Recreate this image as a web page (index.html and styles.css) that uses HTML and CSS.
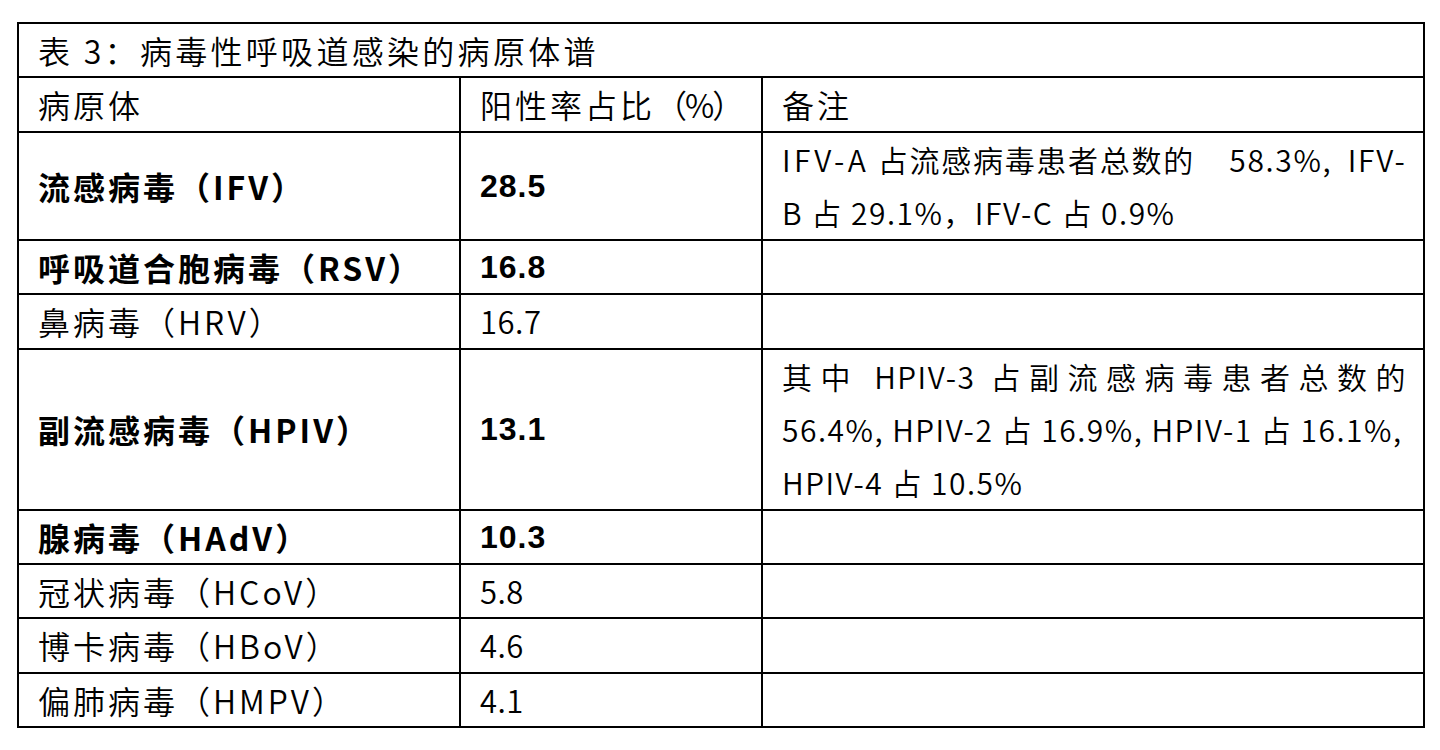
FILE: index.html
```html
<!DOCTYPE html>
<html lang="zh-CN">
<head>
<meta charset="utf-8">
<title>表 3</title>
<link rel="stylesheet" href="styles.css">
</head>
<body>
<table class="tbl">
  <colgroup>
    <col class="c1">
    <col class="c2">
    <col class="c3">
  </colgroup>
  <tr><td class="title" colspan="3">表 3：病毒性呼吸道感染的病原体谱</td></tr>
  <tr class="head"><td>病原体</td><td>阳性率占比<span class="tight">（%）</span></td><td>备注</td></tr>
  <tr class="b"><td>流感病毒（IFV）</td><td class="num">28.5</td><td class="note"><span class="ln l1"><span class="wl">IFV-A</span> 占流感病毒患者总数的<span class="g1"> </span>58.3%,<span class="g2"> </span>IFV-</span><span class="ln">B 占 29.1%，IFV-C 占 0.9%</span></td></tr>
  <tr class="b"><td>呼吸道合胞病毒（RSV）</td><td class="num">16.8</td><td></td></tr>
  <tr><td>鼻病毒（HRV）</td><td class="rnum">16.7</td><td></td></tr>
  <tr class="b"><td>副流感病毒（HPIV）</td><td class="num">13.1</td><td class="note"><span class="jl">其中 HPIV-3 占副流感病毒患者总数的</span><span class="ln">56.4%, HPIV-2 占 16.9%, HPIV-1 占 16.1%,</span><span class="ln">HPIV-4 占 10.5%</span></td></tr>
  <tr class="b"><td>腺病毒（HAdV）</td><td class="num">10.3</td><td></td></tr>
  <tr><td>冠状病毒（HCoV）</td><td class="rnum">5.8</td><td></td></tr>
  <tr><td>博卡病毒（HBoV）</td><td class="rnum">4.6</td><td></td></tr>
  <tr><td>偏肺病毒（HMPV）</td><td class="rnum">4.1</td><td></td></tr>
</table>
</body>
</html>
```
FILE: styles.css
```css
html, body {
  margin: 0;
  padding: 0;
  background: #fff;
}
body {
  padding: 22px 0 0 17px;
  font-family: "Noto Sans CJK SC", "Noto Sans", sans-serif;
  color: #000;
}
.tbl {
  border-collapse: collapse;
  table-layout: fixed;
  width: 1406px;
}
.c1 { width: 442px; }
.c2 { width: 302px; }
.c3 { width: 662px; }
.tbl td {
  border: 2px solid #000;
  padding: 0 16px 0 19px;
  font-size: 32px;
  line-height: 52.4px;
  letter-spacing: 3px;
  vertical-align: middle;
  white-space: nowrap;
  font-weight: 350;
}
.tbl td.title {
  letter-spacing: 3.3px;
}
.tight {
  letter-spacing: -2px;
}
.tbl .b td {
  font-weight: 700;
}
.tbl .b td.num {
  font-family: "Liberation Sans", Arial, sans-serif;
  font-size: 32px;
  letter-spacing: 1px;
}
.tbl td.rnum {
  font-size: 31px;
  letter-spacing: 0.5px;
}
.tbl td.note,
.tbl .b td.note {
  font-weight: 350;
  font-size: 30px;
  line-height: 53px;
  letter-spacing: 1.5px;
}
.note .jl {
  display: block;
  text-align: justify;
  text-align-last: justify;
}
.note .ln {
  display: block;
}
.note .l1 {
  letter-spacing: 1.7px;
}
.note .wl {
  letter-spacing: 3.5px;
}
.note .g1 {
  word-spacing: 26px;
}
.note .g2 {
  word-spacing: 7px;
}
```
